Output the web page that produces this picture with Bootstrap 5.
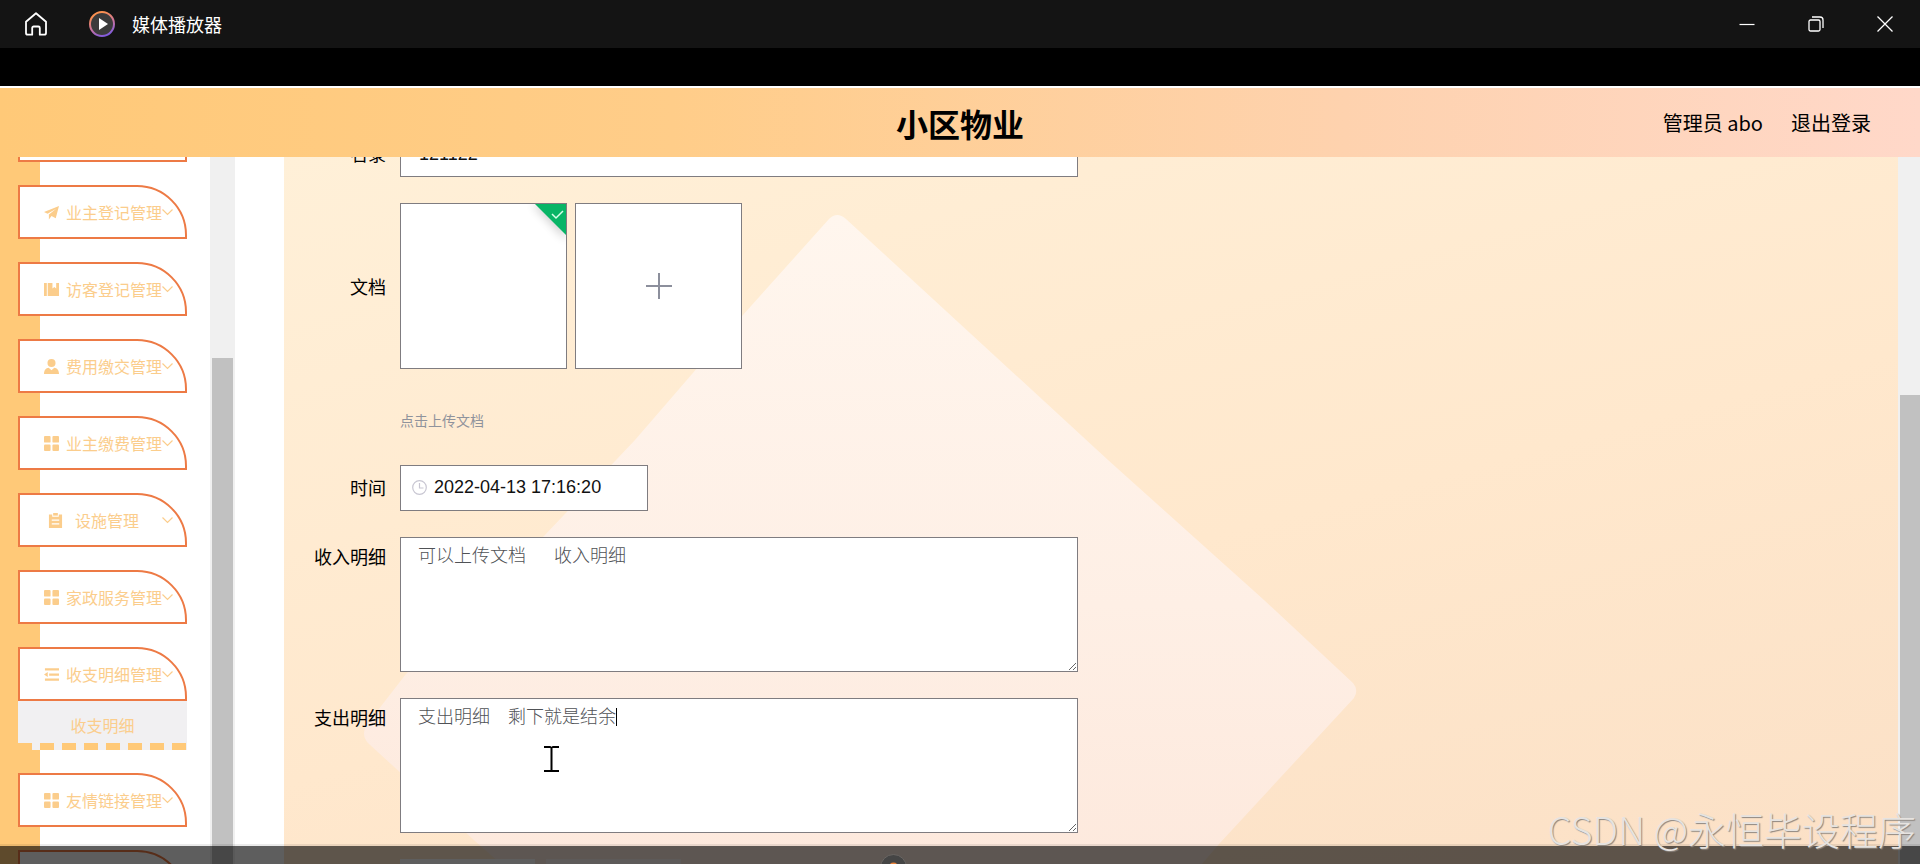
<!DOCTYPE html>
<html lang="zh-CN">
<head>
<meta charset="utf-8">
<meta name="viewport" content="width=device-width, initial-scale=1">
<title>媒体播放器</title>
<link href="https://cdn.jsdelivr.net/npm/bootstrap@5.3.0/dist/css/bootstrap.min.css" rel="stylesheet">
<style>
  body { font-family: "Noto Sans CJK SC", sans-serif; background: #000; color: #000; }
  svg { display: block; flex: none; }

  /* player window */
  .titlebar { height: 48px; background: #141414; color: #fff; font-size: 18px; padding-right: 1px; }
  .titlebar .home { padding: 0 24px 0 24px; }
  .titlebar .app-name { margin-left: 16px; }
  .titlebar .win-btn { width: 69px; }
  .titlebar .win-btn svg { margin: 0 auto; }
  .letterbox { height: 38px; }
  .player-shade { height: 20px; border-top: 2px solid rgba(0, 0, 0, .08); }
  .player-shade .shade-fill { height: 18px; background: rgba(0, 0, 0, .63); }
  .seek-thumb { left: 880px; top: 8px; }

  /* page header */
  .topbar { height: 71px; border-top: 2px solid #fff; background: linear-gradient(90deg, #ffc978, #ffcd89 35%, #fed2ae 70%, #ffd8c9); }
  .topbar h1 { font-size: 32px; line-height: 40px; font-weight: 700; }
  .topbar a { color: #000; font-size: 20px; line-height: 30px; }
  .topbar .account { right: 49px; gap: 28px; }

  /* side menu */
  .sidebar { width: 210px; background: linear-gradient(90deg, #ffc978 40px, #fff 40px); }
  .menu-scroll { margin-top: -49px; padding: 0 23px 0 18px; gap: 23px; }
  .menu-btn { height: 54px; border: 2px solid #ed7a45; border-radius: 0 50px 0 0; background: #fff; color: #fbcd8c; font-size: 16px; line-height: 24px; padding: 0 12px 0 24px; gap: 7px; white-space: nowrap; }
  .menu-btn.roomy { padding-left: 28px; gap: 12px; }
  .menu-btn .chev { margin-left: auto; }
  .menu-btn:not(.roomy) .chev { margin-left: -7px; }
  .submenu { height: 49px; padding-bottom: 7px; background: repeating-linear-gradient(90deg, #ffc978 0 14px, #f1f0f2 14px 22px) bottom / 100% 7px no-repeat #f1f0f2; }
  .submenu a { color: #fbcd8c; font-size: 16px; line-height: 48px; }
  .rail { background: #f0f0f0; padding: 0 2px; }
  .rail-side { width: 25px; }
  .rail-page { width: 22px; padding-right: 0; }
  .rail span { background: #c1c1c1; }
  .rail-side span { margin-top: 201px; }
  .rail-page span { margin-top: 238px; }

  /* form */
  .canvas { margin-left: 49px; background: linear-gradient(165deg, #fff0d8, #ffe8cd 55%, #fbe0c6); }
  .canvas-art { inset: 0; width: 100%; height: 100%; }
  .form-scroll { margin-top: -26px; gap: 26px; }
  .form-line .form-name { width: 102px; margin-right: 14px; font-size: 18px; line-height: 44px; text-align: right; flex: none; }
  .form-line.tall .form-name { line-height: 38px; }
  .field { width: 678px; border: 1px solid #7f7c80; border-radius: 0; background: #fff; color: #111; font-family: "Liberation Sans", "Noto Sans CJK SC", sans-serif; font-size: 18px; line-height: 26px; }
  input.field { height: 46px; padding: 0 18px; }
  input.field.when { width: 248px; padding: 0 18px 2px 33px; }
  textarea.field { height: 135px; padding: 5px 17px; color: #505256; font-weight: 300; display: block; }
  .clock { left: 12px; top: 15px; }
  .upload { height: 236px; }
  .upload .form-name { line-height: 166px; }
  .tile { width: 167px; height: 166px; border: 1px solid #7f7c80; border-radius: 0; background: #fff; }
  .done-mark { right: 0; top: 0; }
  .hint { margin-top: 41px; font-size: 14px; line-height: 21px; color: #8f939c; }
  .caret { left: 216px; top: 10px; width: 1px; height: 18px; background: #000; }
  .ibeam { left: 144px; top: 48px; }
  .form-foot { margin-left: 116px; gap: 11px; }
  .form-foot button { width: 135px; height: 46px; border-radius: 0; background: #fff; border: 0; }
  .form-foot button + button { background: #fbf5f0; }

  .watermark { right: 4px; bottom: 7px; font-size: 38px; line-height: 56px; font-weight: 300; color: #e6e3e0; text-shadow: 1px 1px 1px #8c857f; white-space: nowrap; z-index: 3; }
</style>
</head>
<body class="vh-100 d-flex flex-column overflow-hidden position-relative">

<svg width="0" height="0" class="position-absolute" aria-hidden="true">
  <symbol id="i-send" viewBox="0 0 16 16"><path d="M0 7.500 16 1 12.500 14 8 11.600 5.200 15.500V10L13 4 3.800 9.400z" fill="currentColor"/></symbol>
  <symbol id="i-book" viewBox="0 0 16 16"><path d="M0 1h3v14H0zM4 1h5v6l2-1.800L13 7V1h3v14H4z" fill="currentColor"/></symbol>
  <symbol id="i-user" viewBox="0 0 16 16"><circle cx="8" cy="4.300" r="4.300" fill="currentColor"/><path d="M0 16c0-4.500 2.200-6.500 5-6.800L8 12l3-2.800c2.800.3 5 2.300 5 6.800z" fill="currentColor"/></symbol>
  <symbol id="i-grid" viewBox="0 0 16 16"><g fill="currentColor"><rect width="7" height="7" x="0" y="0" rx="1"/><rect width="7" height="7" x="9" y="0" rx="1"/><rect width="7" height="7" x="0" y="9" rx="1"/><rect width="7" height="7" x="9" y="9" rx="1"/></g></symbol>
  <symbol id="i-clip" viewBox="0 0 16 16"><path d="M1 1.500h3.500V4h7V1.500H15V16H1z" fill="currentColor"/><path d="M5.500 0h5v2.800h-5z" fill="currentColor"/><path d="M4 7.500h8M4 11.500h8" stroke="#fff" stroke-width="1.300"/></symbol>
  <symbol id="i-list" viewBox="0 0 16 16"><path d="M1 2.500h15M5.500 8H16M1 13.500h15" stroke="currentColor" stroke-width="2.400"/><path d="M0 8l4-2.600v5.200z" fill="currentColor"/></symbol>
  <symbol id="i-chev" viewBox="0 0 11 8"><path d="M.5 1.500l5 5 5-5" fill="none" stroke="currentColor" stroke-width="1.200"/></symbol>
</svg>

<header class="titlebar d-flex align-items-center flex-shrink-0">
  <button class="home btn border-0 rounded-0" type="button" aria-label="主页">
    <svg width="24" height="24" viewBox="0 0 24 24" fill="none" stroke="#fff" stroke-width="1.800" stroke-linejoin="round"><path d="M2 9.800 12 1.300l10 8.500V21a1.700 1.700 0 0 1-1.700 1.700h-4.500V16a1.500 1.500 0 0 0-1.500-1.500H9.700A1.500 1.500 0 0 0 8.200 16v6.700H3.700A1.700 1.700 0 0 1 2 21z"/></svg>
  </button>
  <svg class="ms-3" width="28" height="28" viewBox="0 0 28 28"><defs><linearGradient id="ring" x1="0.300" y1="0" x2="0.700" y2="1"><stop offset="0.100" stop-color="#fb9050"/><stop offset="0.550" stop-color="#c973a0"/><stop offset="1" stop-color="#7c5ae0"/></linearGradient></defs><circle cx="14" cy="14" r="12" fill="#3b3b3b" stroke="url(#ring)" stroke-width="2"/><path d="M11 8v12l9-6z" fill="#fff"/></svg>
  <span class="app-name">媒体播放器</span>
  <div class="ms-auto d-flex">
    <button class="win-btn btn border-0" type="button" aria-label="最小化"><svg width="16" height="16" viewBox="0 0 16 16"><path d="M.5 8.500h15" stroke="#fff" stroke-width="1.200"/></svg></button>
    <button class="win-btn btn border-0" type="button" aria-label="还原"><svg width="16" height="16" viewBox="0 0 16 16" fill="none" stroke="#fff" stroke-width="1.300"><rect x="1" y="4" width="11" height="11" rx="1.500"/><path d="M4 1h8a3 3 0 0 1 3 3v8"/></svg></button>
    <button class="win-btn btn border-0" type="button" aria-label="关闭"><svg width="16" height="16" viewBox="0 0 16 16"><path d="M.5.500l15 15M15.500.500l-15 15" stroke="#fff" stroke-width="1.300"/></svg></button>
  </div>
</header>
<div class="letterbox flex-shrink-0"></div>

<nav class="topbar d-flex align-items-center justify-content-center flex-shrink-0 position-relative">
  <h1 class="m-0">小区物业</h1>
  <div class="account position-absolute d-flex">
    <a class="text-decoration-none" href="#">管理员 abo</a>
    <a class="text-decoration-none" href="#">退出登录</a>
  </div>
</nav>

<div class="d-flex flex-grow-1 overflow-hidden bg-white">
  <aside class="sidebar flex-shrink-0 overflow-hidden">
    <div class="menu-scroll d-flex flex-column">
      <a class="menu-btn d-flex align-items-center flex-shrink-0 text-decoration-none rounded-0" href="#" aria-label="菜单"></a>
      <a class="menu-btn d-flex align-items-center text-decoration-none" href="#"><svg width="15" height="15"><use href="#i-send"/></svg>业主登记管理<svg class="chev" width="11" height="8"><use href="#i-chev"/></svg></a>
      <a class="menu-btn d-flex align-items-center text-decoration-none" href="#"><svg width="15" height="15"><use href="#i-book"/></svg>访客登记管理<svg class="chev" width="11" height="8"><use href="#i-chev"/></svg></a>
      <a class="menu-btn d-flex align-items-center text-decoration-none" href="#"><svg width="15" height="15"><use href="#i-user"/></svg>费用缴交管理<svg class="chev" width="11" height="8"><use href="#i-chev"/></svg></a>
      <a class="menu-btn d-flex align-items-center text-decoration-none" href="#"><svg width="15" height="15"><use href="#i-grid"/></svg>业主缴费管理<svg class="chev" width="11" height="8"><use href="#i-chev"/></svg></a>
      <a class="menu-btn roomy d-flex align-items-center text-decoration-none" href="#"><svg width="15" height="15"><use href="#i-clip"/></svg>设施管理<svg class="chev" width="11" height="8"><use href="#i-chev"/></svg></a>
      <a class="menu-btn d-flex align-items-center text-decoration-none" href="#"><svg width="15" height="15"><use href="#i-grid"/></svg>家政服务管理<svg class="chev" width="11" height="8"><use href="#i-chev"/></svg></a>
      <div>
        <a class="menu-btn d-flex align-items-center text-decoration-none" href="#"><svg width="15" height="15"><use href="#i-list"/></svg>收支明细管理<svg class="chev" width="11" height="8"><use href="#i-chev"/></svg></a>
        <div class="submenu text-center"><a class="text-decoration-none" href="#">收支明细</a></div>
      </div>
      <a class="menu-btn d-flex align-items-center text-decoration-none" href="#"><svg width="15" height="15"><use href="#i-grid"/></svg>友情链接管理<svg class="chev" width="11" height="8"><use href="#i-chev"/></svg></a>
      <a class="menu-btn d-flex align-items-center text-decoration-none" href="#" aria-label="菜单"></a>
    </div>
  </aside>
  <div class="rail rail-side d-flex flex-shrink-0"><span class="flex-grow-1"></span></div>

  <main class="canvas flex-grow-1 overflow-hidden position-relative">
    <svg class="canvas-art position-absolute" viewBox="0 0 1614 707" preserveAspectRatio="xMinYMin slice" aria-hidden="true">
      <defs><linearGradient id="pane" x1="0" y1="0" x2="0" y2="1"><stop offset="0" stop-color="#fff6ee"/><stop offset="0.600" stop-color="#feefe5"/><stop offset="1" stop-color="#fde9dd"/></linearGradient></defs>
      <path d="M545 62Q553 54 562 62L824 303 980 443 1069 526Q1075 533 1070 541L935 687 918 707H217L191 684 84 586Q76 577 84 566L122 517 261 378 351 283 459 158z" fill="url(#pane)"/>
    </svg>
    <form class="form-scroll d-flex flex-column position-relative">
      <div class="form-line d-flex">
        <label class="form-name" for="name">名录</label>
        <input class="field" id="name" type="text" value="121122">
      </div>
      <div class="form-line upload d-flex">
        <label class="form-name" for="add">文档</label>
        <div>
          <div class="d-flex gap-2">
            <div class="tile position-relative overflow-hidden">
              <svg class="done-mark position-absolute" width="50" height="50" viewBox="0 0 50 50"><defs><filter id="soft" x="-50%" y="-50%" width="200%" height="200%"><feGaussianBlur stdDeviation="5"/></filter></defs><path d="M16 0h34v36z" fill="#000" opacity=".18" filter="url(#soft)"/><path d="M19 0h31v31z" fill="#08b566"/><path d="M36 10l4 4 7-7" fill="none" stroke="#d8ffe9" stroke-width="1.500"/></svg>
            </div>
            <button class="tile d-flex align-items-center justify-content-center p-0" id="add" type="button" aria-label="上传">
              <svg width="26" height="26" viewBox="0 0 26 26"><path d="M13 0v26M0 13h26" stroke="#8c8f9c" stroke-width="2"/></svg>
            </button>
          </div>
          <div class="hint">点击上传文档</div>
        </div>
      </div>
      <div class="form-line d-flex">
        <label class="form-name" for="when">时间</label>
        <div class="position-relative">
          <input class="field when" id="when" type="text" value="2022-04-13 17:16:20">
          <svg class="clock position-absolute" width="15" height="15" viewBox="0 0 15 15" fill="none" stroke="#c8c6d2" stroke-width="1.200"><circle cx="7.500" cy="7.500" r="6.800"/><path d="M7.500 3v5h4"/></svg>
        </div>
      </div>
      <div class="form-line tall d-flex">
        <label class="form-name" for="income">收入明细</label>
        <textarea class="field" id="income">可以上传文档　  收入明细</textarea>
      </div>
      <div class="form-line tall d-flex">
        <label class="form-name" for="expense">支出明细</label>
        <div class="position-relative">
          <textarea class="field" id="expense">支出明细　剩下就是结余</textarea>
          <span class="caret position-absolute"></span>
          <svg class="ibeam position-absolute" width="15" height="26" viewBox="0 0 15 26"><path d="M0 1h6l1.500 1L9 1h6M0 25h6l1.500-1L9 25h6M7.500 2v22" fill="none" stroke="#000" stroke-width="2"/></svg>
        </div>
      </div>
      <div class="form-foot d-flex">
        <button type="button" aria-label="提交"></button>
        <button type="button" aria-label="取消"></button>
      </div>
    </form>
  </main>
  <div class="rail rail-page d-flex flex-shrink-0"><span class="flex-grow-1"></span></div>
</div>

<div class="player-shade position-absolute bottom-0 start-0 end-0 overflow-hidden">
  <div class="shade-fill"></div>
  <svg class="seek-thumb position-absolute" width="27" height="27" viewBox="0 0 27 27"><circle cx="13.500" cy="13.500" r="13" fill="#454545" stroke="#6a6663"/><circle cx="13.500" cy="13.500" r="5" fill="#e8823a"/></svg>
</div>
<div class="watermark position-absolute">CSDN @永恒毕设程序</div>

<script src="https://cdn.jsdelivr.net/npm/bootstrap@5.3.0/dist/js/bootstrap.bundle.min.js"></script>
</body>
</html>
